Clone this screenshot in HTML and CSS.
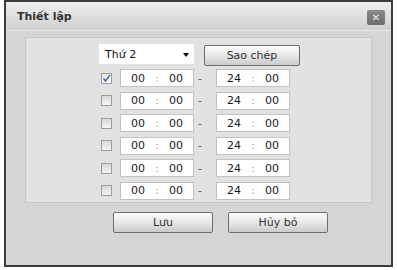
FILE: index.html
```html
<!DOCTYPE html>
<html lang="vi">
   <head>
      <meta charset="UTF-8">
      <title>Thiết lập</title>
      <link rel="stylesheet" href="styles.css">
   </head>
   <body>
 <div class="dialog">
   <div class="titlebar">
     <span class="title">Thiết lập</span>
     <span class="close">&#x2715;</span>
   </div>
   <div class="body">
     <div class="panel">
       <div class="head">
         <div class="select">Thứ 2<span class="arrow"></span></div>
         <button class="btn copy">Sao chép</button>
       </div>

       <div class="row">
         <span class="check on"><svg width="9" height="9" viewBox="0 0 9 9"><path d="M1.5 4.5 L3.6 7 L7.8 1.2" fill="none" stroke="#3a64a8" stroke-width="1.4"/></svg></span>
         <div class="time"><span class="f">00</span><span class="c">:</span><span class="f">00</span></div>
         <span class="dash">-</span>
         <div class="time"><span class="f">24</span><span class="c">:</span><span class="f">00</span></div>
       </div>
       <div class="row">
         <span class="check"></span>
         <div class="time"><span class="f">00</span><span class="c">:</span><span class="f">00</span></div>
         <span class="dash">-</span>
         <div class="time"><span class="f">24</span><span class="c">:</span><span class="f">00</span></div>
       </div>
       <div class="row">
         <span class="check"></span>
         <div class="time"><span class="f">00</span><span class="c">:</span><span class="f">00</span></div>
         <span class="dash">-</span>
         <div class="time"><span class="f">24</span><span class="c">:</span><span class="f">00</span></div>
       </div>
       <div class="row">
         <span class="check"></span>
         <div class="time"><span class="f">00</span><span class="c">:</span><span class="f">00</span></div>
         <span class="dash">-</span>
         <div class="time"><span class="f">24</span><span class="c">:</span><span class="f">00</span></div>
       </div>
       <div class="row">
         <span class="check"></span>
         <div class="time"><span class="f">00</span><span class="c">:</span><span class="f">00</span></div>
         <span class="dash">-</span>
         <div class="time"><span class="f">24</span><span class="c">:</span><span class="f">00</span></div>
       </div>
       <div class="row">
         <span class="check"></span>
         <div class="time"><span class="f">00</span><span class="c">:</span><span class="f">00</span></div>
         <span class="dash">-</span>
         <div class="time"><span class="f">24</span><span class="c">:</span><span class="f">00</span></div>
       </div>
     </div>

     <div class="actions">
       <button class="btn">Lưu</button>
       <button class="btn">Hủy bỏ</button>
     </div>
   </div>
 </div>
</body>
</html>
```

FILE: styles.css
```css
       /* page */
       body {
       font-family: 'DejaVu Sans', Verdana, sans-serif;
       font-size: 11px;
       margin: 0;
       padding: 0;
       background-color: #fff;
       color: #222;
       }
       .dialog {
       margin-left: 4px;
       width: 385px;
       height: 263px;
       border: 2px solid #3c3c3c;
       background-color: #d5d5d5;
       display: flex;
       flex-direction: column;
       }
       /* title bar */
       .titlebar {
       height: 28px;
       display: flex;
       align-items: center;
       justify-content: space-between;
       padding: 0 6px 0 11px;
       background: linear-gradient(#eeeeee, #d9d9d9 70%, #cfcfcf);
       border-bottom: 1px solid #e6e6e6;
       }
       .title {
       font-weight: bold;
       color: #333;
       }
       .close {
       width: 18px;
       height: 15px;
       margin-top: 2px;
       border-radius: 2px;
       background: linear-gradient(#8c8c8c, #6c6c6c);
       color: #eee;
       font-size: 10px;
       font-weight: bold;
       line-height: 15px;
       text-align: center;
       }
       /* content */
       .body {
       padding: 6px 19px 0 19px;
       }
       .panel {
       background-color: #e2e2e2;
       border: 1px solid #c6c6c6;
       padding-top: 6px;
       box-sizing: border-box;
       height: 166px;
       }
       .head {
       display: flex;
       align-items: flex-start;
       margin-left: 73px;
       margin-bottom: 3px;
       }
       .select {
       width: 95px;
       height: 20px;
       background-color: #fff;
       box-sizing: border-box;
       padding-left: 6px;
       line-height: 21px;
       color: #111;
       position: relative;
       }
       .arrow {
       position: absolute;
       right: 5px;
       top: 9px;
       border-left: 3.5px solid transparent;
       border-right: 3.5px solid transparent;
       border-top: 4px solid #111;
       }
       .btn {
       font-family: 'DejaVu Sans', Verdana, sans-serif;
       font-size: 11px;
       color: #333;
       height: 21px;
       padding: 0;
       border: 1px solid #6e6e6e;
       border-radius: 2px;
       background: linear-gradient(#fbfbfb, #e9e9e9 45%, #cbcbcb);
       cursor: pointer;
       }
       .copy {
       width: 96px;
       margin-left: 10px;
       margin-top: 1px;
       }
       .row {
       display: flex;
       align-items: center;
       height: 18px;
       margin-left: 75px;
       margin-bottom: 4.5px;
       }
       .check {
       width: 11px;
       height: 11px;
       box-sizing: border-box;
       border: 1px solid #9d9d9d;
       background: linear-gradient(#d8d8d8, #f4f4f4);
       margin-right: 8px;
       display: flex;
       align-items: center;
       justify-content: center;
       }
       .check.on {
       background: linear-gradient(#e8e8e8, #fafafa);
       }
       .time {
       width: 74px;
       height: 18px;
       box-sizing: border-box;
       border: 1px solid #c2c2c2;
       background-color: #fff;
       padding-left: 3px;
       display: flex;
       align-items: center;
       }
       .f {
       width: 28px;
       text-align: center;
       color: #1a1a1a;
       }
       .c {
       width: 10px;
       text-align: center;
       color: #a0a0a0;
       }
       .dash {
       width: 22px;
       padding-left: 4px;
       box-sizing: border-box;
       color: #555;
       }
       /* bottom buttons */
       .actions {
       display: flex;
       gap: 15px;
       margin: 9px 0 0 88px;
       }
       .actions .btn {
       width: 100px;
       }
```
